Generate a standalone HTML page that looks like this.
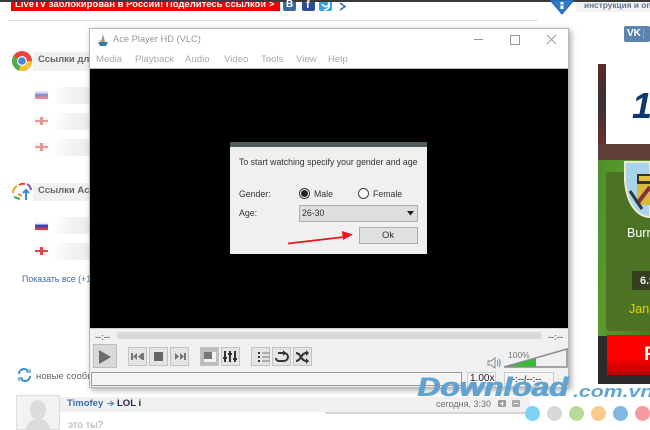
<!DOCTYPE html>
<html><head><meta charset="utf-8">
<style>
html,body{margin:0;padding:0;background:#fff}
#p{position:relative;width:650px;height:430px;overflow:hidden;background:#fff;font-family:"Liberation Sans","Noto Sans CJK SC",sans-serif;filter:blur(.3px)}
#p div,#p svg{position:absolute}
.t{white-space:nowrap}
.row{height:17px;background:linear-gradient(90deg,#fff,#f1f1f1 60%,#eee)}
.ctl{width:17px;height:17px;background:#e4e4e4;border:1px solid #c4c4c4;box-sizing:content-box}
.m{top:54px;font-size:9.6px;color:#a9a9a9;white-space:nowrap}
.d{font-size:8.75px;color:#333;white-space:nowrap}
</style></head><body><div id="p">
<div style="left:0;top:0;width:650px;height:2px;background:#3a3a3a"></div>
<div style="left:11px;top:2px;width:269px;height:9px;background:#f40000;overflow:hidden"><div class="t" style="left:4px;top:-3px;font-size:9.5px;font-weight:bold;color:#fff">LiveTV заблокирован в России! Поделитесь ссылкой &gt;</div></div>
<div style="left:283px;top:2px;width:13px;height:9px;background:#3c6a9c;border-radius:0 0 2px 2px"><div class="t" style="left:3px;top:-3px;font-size:10px;font-weight:bold;color:#fff">В</div></div>
<div style="left:302px;top:2px;width:13px;height:9px;background:#2f4f92;border-radius:0 0 2px 2px"><div class="t" style="left:4px;top:-3px;font-size:11px;font-weight:bold;color:#fff">f</div></div>
<div style="left:319px;top:2px;width:13px;height:9px;background:#35a4e6;border-radius:0 0 2px 2px"></div>
<svg style="left:320px;top:2px" width="11" height="9"><path d="M2 2C4 5 6 5 8 4L9 1C10 5 8 8 4 8" fill="none" stroke="#fff" stroke-width="1.5"/></svg>
<svg style="left:338px;top:2px" width="10" height="9"><path d="M2 1L7 4.5L2 8" fill="none" stroke="#2a6bb0" stroke-width="1.5"/></svg>
<div style="left:8px;top:20px;width:530px;height:1px;background:#ddd"></div>
<svg style="left:548px;top:0" width="28" height="15"><path d="M2 0H26L14 14Z" fill="#2f7cc9" stroke="#1f5e9f"/><rect x="12.5" y="2" width="3" height="2.5" fill="#fff"/><rect x="12.5" y="5.5" width="3" height="3.5" fill="#fff"/></svg>
<div style="left:576px;top:2px;width:74px;height:10px;background:#f2f2f2"></div>
<div class="t" style="left:584px;top:0;font-size:8.3px;font-weight:bold;color:#5b7598">инструкция и оп</div>
<div style="left:624px;top:26px;width:26px;height:16px;background:#5c82ae;border-radius:2px"><div class="t" style="left:3px;top:2px;font-size:10px;font-weight:bold;color:#fff">VK</div><div style="left:19px;top:3px;width:1px;height:10px;background:#8aa6c6"></div></div>

<svg style="left:11px;top:50px" width="22" height="22" viewBox="0 0 22 22"><circle cx="11" cy="11" r="10" fill="#e8453c"/><path d="M11 11L2.3 6A10 10 0 0 0 8 20.5Z" fill="#4dae50"/><path d="M11 11L8 20.5A10 10 0 0 0 21 11Z" fill="#f4c430"/><circle cx="11" cy="11" r="5" fill="#fff"/><circle cx="11" cy="11" r="3.8" fill="#4a86d8"/></svg>
<div style="left:33px;top:52px;width:56px;height:19px;background:#f1f1f1"></div>
<div class="t" style="left:38px;top:54px;font-size:9.5px;font-weight:bold;color:#666">Ссылки дл</div>
<div class="row" style="left:52px;top:87px;width:37px"></div>
<div class="row" style="left:52px;top:113px;width:37px"></div>
<div class="row" style="left:52px;top:139px;width:37px"></div>
<div style="left:35px;top:91px;width:13px;height:8px;background:linear-gradient(#dfe0ea 0 33%,#8a8fd0 33% 66%,#e88a90 66%)"></div>
<div style="left:35px;top:117px;width:13px;height:8px;background:linear-gradient(90deg,transparent 5px,#e59a9a 5px 8px,transparent 8px),linear-gradient(transparent 3px,#e59a9a 3px 5px,transparent 5px),#f2f2f2"></div>
<div style="left:35px;top:143px;width:13px;height:8px;background:linear-gradient(90deg,transparent 5px,#e59a9a 5px 8px,transparent 8px),linear-gradient(transparent 3px,#e59a9a 3px 5px,transparent 5px),#f2f2f2"></div>
<svg style="left:11px;top:182px" width="22" height="20" viewBox="0 0 22 20" fill="none" stroke-width="2"><path d="M2 11A8 8 0 0 1 6 4" stroke="#f2a51f"/><path d="M8 3A8 8 0 0 1 14 2" stroke="#e0473c"/><path d="M16 2A8 8 0 0 1 20 8" stroke="#8b4fc4"/><path d="M15 18V9M12 11L15 8L18 11" stroke="#2f8fd0"/><path d="M3 15L9 17" stroke="#3fae49"/><path d="M7 12L11 14" stroke="#e58a2b"/></svg>
<div style="left:33px;top:183px;width:56px;height:18px;background:#f1f1f1"></div>
<div class="t" style="left:38px;top:185px;font-size:9.5px;font-weight:bold;color:#666">Ссылки Ac</div>
<div class="row" style="left:52px;top:217px;width:37px"></div>
<div class="row" style="left:52px;top:243px;width:37px"></div>
<div style="left:35px;top:222px;width:13px;height:8px;background:linear-gradient(#eee 0 33%,#3b46b8 33% 66%,#e0353c 66%)"></div>
<div style="left:35px;top:247px;width:13px;height:8px;background:linear-gradient(90deg,transparent 5px,#d84a4a 5px 8px,transparent 8px),linear-gradient(transparent 3px,#d84a4a 3px 5px,transparent 5px),#f2f2f2"></div>
<div class="t" style="left:22px;top:274px;font-size:8.8px;color:#3d6a9e">Показать все (+1</div>

<svg style="left:18px;top:368px" width="13" height="14" viewBox="0 0 13 14" fill="none" stroke="#3b8fd0" stroke-width="2"><path d="M1 6A5 5 0 0 1 10 3"/><path d="M12 8A5 5 0 0 1 3 11"/><path d="M8 4H12V1" stroke-width="1.2"/><path d="M5 10H1V13" stroke-width="1.2"/></svg>
<div class="t" style="left:36px;top:371px;font-size:9.5px;color:#666">новые сообщ</div>
<div style="left:16px;top:395px;width:44px;height:35px;background:#f2f2f2;border:1px solid #ddd;box-sizing:border-box"></div>
<svg style="left:24px;top:398px" width="30" height="32"><ellipse cx="14" cy="12" rx="8" ry="10" fill="#dcdcdc"/><path d="M2 32C3 24 8 21 14 21S25 24 26 32Z" fill="#dcdcdc"/></svg>
<div style="left:60px;top:397px;width:470px;height:15px;background:#f1f1f1"></div>
<div class="t" style="left:67px;top:398px;font-size:9.5px;font-weight:bold;color:#3c6ea8">Timofey</div>
<svg style="left:106px;top:399px" width="9" height="9"><path d="M1 4.5H7M4.5 2L7.5 4.5L4.5 7" fill="none" stroke="#5b8dc0" stroke-width="1.3"/></svg>
<div class="t" style="left:117px;top:398px;font-size:9.5px;font-weight:bold;color:#1c2a44">LOL i</div>
<div class="t" style="left:68px;top:420px;font-size:10px;color:#aaa">это ты?</div>
<div class="t" style="left:436px;top:399px;font-size:9px;color:#707070">сегодня, 3:30</div>
<div style="left:498px;top:400px;width:8px;height:7px;background:#9d9d9d;border-radius:1px"><div style="left:2px;top:3px;width:4px;height:1px;background:#fff"></div><div style="left:3.5px;top:1.5px;width:1px;height:4px;background:#fff"></div></div>
<div style="left:512px;top:400px;width:8px;height:7px;background:#aaa;border-radius:1px"><div style="left:2px;top:3px;width:4px;height:1px;background:#fff"></div></div>
<div style="left:325px;top:412px;width:205px;height:2px;background:#d6d6d6"></div>

<!-- ad -->
<div style="left:598px;top:64px;width:52px;height:320px;background:#3a2a2a"></div>
<div style="left:598px;top:64px;width:8px;height:80px;background:linear-gradient(#5a2a2a,#3a3232,#6a3030)"></div>
<div style="left:606px;top:64px;width:44px;height:80px;background:#fff"></div>
<div class="t" style="left:632px;top:85px;font-size:36px;font-weight:bold;font-style:italic;color:#0f3a70">1/</div>
<div style="left:598px;top:144px;width:52px;height:16px;background:#5e4038"></div>
<div style="left:598px;top:160px;width:52px;height:176px;background:linear-gradient(100deg,#4d8f2b,#5c9a2e 40%,#3f7d25)"></div>
<div style="left:606px;top:172px;width:44px;height:159px;background:#4c7226;border-radius:3px 0 0 4px"></div>
<svg style="left:624px;top:161px" width="26" height="57" viewBox="0 0 26 57"><path d="M1 1H26V56C14 56 3 44 1 20Z" fill="#a9d3e8" stroke="#efeacb" stroke-width="2"/><rect x="13" y="13" width="13" height="10" fill="#3a3320"/><rect x="15" y="15" width="11" height="5" fill="#e0c040"/><rect x="13" y="23" width="13" height="21" fill="#d8b83a"/><path d="M13 43L26 26" stroke="#8a2c44" stroke-width="4"/><path d="M6 30L18 48" stroke="#2c3a3c" stroke-width="3"/></svg>
<div class="t" style="left:627px;top:226px;font-size:12.5px;color:#fff">Burn</div>
<div style="left:632px;top:271px;width:18px;height:19px;background:#343f1e"></div>
<div class="t" style="left:640px;top:275px;font-size:11px;font-weight:bold;color:#eee">6.9</div>
<div class="t" style="left:629px;top:302px;font-size:12.5px;color:#ecd400">Jan</div>
<div style="left:598px;top:336px;width:52px;height:48px;background:#2c2a28"></div>
<div style="left:607px;top:335px;width:43px;height:40px;background:linear-gradient(#ff0000 55%,#b80000);"></div>
<div class="t" style="left:644px;top:344px;font-size:19px;font-weight:bold;color:#fff">F</div>

<!-- window -->
<div style="left:89px;top:28px;width:480px;height:360px;background:#fff;border:1px solid #b8b8b8;box-sizing:border-box;box-shadow:2px 2px 6px rgba(0,0,0,.35)"></div>
<svg style="left:96px;top:33px" width="14" height="14"><path d="M7 1L9 9H5Z" fill="#7f9aa8"/><path d="M2 9L12 9L10 13H4Z" fill="#3b7c93"/><path d="M3 7L6 9" stroke="#d0a040"/></svg>
<div class="t" style="left:113px;top:34px;font-size:9.3px;color:#969696">Ace Player HD (VLC)</div>
<div class="m" style="left:96px">Media</div><div class="m" style="left:135px">Playback</div><div class="m" style="left:185px">Audio</div><div class="m" style="left:224px">Video</div><div class="m" style="left:261px">Tools</div><div class="m" style="left:296px">View</div><div class="m" style="left:328px">Help</div>
<div style="left:474px;top:39px;width:9px;height:1px;background:#999"></div>
<div style="left:510px;top:35px;width:8px;height:8px;border:1px solid #999"></div>
<svg style="left:546px;top:34px" width="11" height="11"><path d="M1 1L10 10M10 1L1 10" stroke="#9a9a9a" stroke-width="1"/></svg>
<div style="left:90px;top:68px;width:478px;height:1px;background:#bbb"></div>
<div style="left:90px;top:69px;width:478px;height:259px;background:#000"></div>
<div style="left:90px;top:328px;width:478px;height:59px;background:#f0f0f0;border-top:1px solid #cfcfcf;box-sizing:border-box"></div>

<!-- dialog -->
<div style="left:230px;top:142px;width:197px;height:112px;background:#f0f0f0"></div>
<div style="left:230px;top:142px;width:197px;height:5px;background:#505b5d"></div>
<div class="d" style="left:239px;top:157px">To start watching specify your gender and age</div>
<div class="d" style="left:239px;top:189px">Gender:</div>
<div class="d" style="left:239px;top:208px">Age:</div>
<div style="left:299px;top:188px;width:9px;height:9px;border:1px solid #333;border-radius:50%;background:#fff"></div>
<div style="left:301px;top:190px;width:7px;height:7px;border-radius:50%;background:#222"></div>
<div class="d" style="left:314px;top:189px">Male</div>
<div style="left:358px;top:188px;width:9px;height:9px;border:1px solid #444;border-radius:50%;background:#fff"></div>
<div class="d" style="left:373px;top:189px">Female</div>
<div style="left:299px;top:205px;width:119px;height:17px;background:#dedede;border:1px solid #b0b0b0;box-sizing:border-box"></div>
<div class="d" style="left:302px;top:208px">26-30</div>
<svg style="left:407px;top:211px" width="8" height="5"><path d="M0 0H7L3.5 4.5Z" fill="#222"/></svg>
<div style="left:359px;top:227px;width:59px;height:17px;background:#e1e1e1;border:1px solid #adadad;box-sizing:border-box"></div>
<div class="t" style="left:382px;top:230px;font-size:9.5px;color:#333">Ok</div>
<svg style="left:286px;top:228px" width="72" height="20"><path d="M2 15.5L58 9" stroke="#f0141c" stroke-width="1.8"/><path d="M67 6.5L56 3L57 12Z" fill="#f0141c"/></svg>

<!-- controls -->
<div class="t" style="left:95px;top:332px;font-size:9px;font-weight:bold;color:#777">--:--</div>
<div style="left:117px;top:332px;width:425px;height:7px;background:#d9d9d9;border-radius:3px"></div>
<div class="t" style="left:548px;top:332px;font-size:9px;font-weight:bold;color:#777">--:--</div>
<div style="left:93px;top:344px;width:22px;height:22px;background:#d9d9d9;border:1px solid #bdbdbd"></div>
<svg style="left:98px;top:349px" width="14" height="16"><path d="M1 1L13 8L1 15Z" fill="#6c6c6c"/></svg>
<div class="ctl" style="left:128px;top:347px"></div>
<div class="ctl" style="left:149px;top:347px"></div>
<div class="ctl" style="left:170px;top:347px"></div>
<div class="ctl" style="left:200px;top:347px;background:#bdbdbd"></div>
<div class="ctl" style="left:221px;top:347px"></div>
<div class="ctl" style="left:251px;top:347px"></div>
<div class="ctl" style="left:272px;top:347px"></div>
<div class="ctl" style="left:293px;top:347px"></div>
<svg style="left:128px;top:347px" width="190" height="19" fill="#666"><path d="M3 6h2v7H3zM9 6v7l-4-3.5zM14 6v7l-4-3.5zM14 6h2v7h-2z" fill="#777"/><rect x="26" y="5" width="9" height="9" fill="#666"/><path d="M47 6v7l4-3.5zM52 6v7l4-3.5zM56 6h2v7h-2z" fill="#777"/><rect x="76" y="5" width="12" height="10" fill="#f2f2f2"/><rect x="76" y="5" width="8" height="7" fill="#777"/><path d="M97 4v11M102 4v11M107 4v11" stroke="#333" stroke-width="2"/><path d="M95 11h4M100 7h4M105 12h4" stroke="#333" stroke-width="2"/><path d="M130 5h2v2h-2zM130 9h2v2h-2zM130 13h2v2h-2z" fill="#333"/><path d="M134 6h8M134 10h8M134 14h8" stroke="#999" stroke-width="1.5"/><path d="M150 6h6a4 4 0 0 1 0 8h-5a3 3 0 0 1-3-3" fill="none" stroke="#333" stroke-width="2"/><path d="M155 3l3 3-3 3z" fill="#333"/><path d="M168 6c5 0 5 8 10 8M168 14c5 0 5-8 10-8" fill="none" stroke="#333" stroke-width="2"/><path d="M178 3l3 3-3 3zM178 11l3 3-3 3z" fill="#333"/></svg>
<div style="left:91px;top:372px;width:371px;height:14px;background:#f4f4f4;border:1px solid #999;box-sizing:border-box"></div>
<div style="left:467px;top:372px;width:29px;height:15px;background:#f4f4f4;border:1px solid #ccc;box-sizing:border-box"></div>
<div class="t" style="left:470px;top:373px;font-size:10px;color:#222">1.00x</div>
<div style="left:504px;top:372px;width:50px;height:15px;background:#f4f4f4;border:1px solid #ccc;box-sizing:border-box"></div>
<div class="t" style="left:509px;top:374px;font-size:9px;font-weight:bold;color:#555">--:--/--:--</div>
<svg style="left:487px;top:356px" width="14" height="14" fill="none"><path d="M1 5H4L8 2V12L4 9H1Z" stroke="#888"/><path d="M10 4.5Q12 7 10 9.5M12 3Q14.5 7 12 11" stroke="#5a88b8"/></svg>
<svg style="left:503px;top:348px" width="66" height="22"><path d="M1 19L33 10V19Z" fill="#36bd36"/><path d="M1 19L64 1V19Z" fill="none" stroke="#8a8a8a" stroke-width="1.5"/></svg>
<div class="t" style="left:508px;top:350px;font-size:8.5px;color:#777">100%</div>

<!-- watermark -->
<div style="left:531px;top:397px;width:119px;height:33px;background:#fff"></div>
<div class="t" style="left:417px;top:372px;font-size:27px;font-weight:bold;font-style:italic;color:#5a9fd0;opacity:.95;transform:scaleX(1.17);transform-origin:left top;text-shadow:1px 0 #5a9fd0">Download</div>
<div class="t" style="left:573px;top:382px;font-size:17px;font-weight:bold;font-style:italic;color:#5a9fd0;opacity:.95;transform:scaleX(1.25);transform-origin:left top">.com.vn</div>
<div style="left:525px;top:406px;width:15px;height:15px;border-radius:50%;background:#7dd3f7"></div>
<div style="left:547px;top:406px;width:15px;height:15px;border-radius:50%;background:#d8d8d8"></div>
<div style="left:569px;top:406px;width:15px;height:15px;border-radius:50%;background:#b9da9a"></div>
<div style="left:591px;top:406px;width:15px;height:15px;border-radius:50%;background:#f9cc8e"></div>
<div style="left:613px;top:406px;width:15px;height:15px;border-radius:50%;background:#7fb8e0"></div>
<div style="left:635px;top:406px;width:15px;height:15px;border-radius:50%;background:#f59aa0"></div>
</div></body></html>
